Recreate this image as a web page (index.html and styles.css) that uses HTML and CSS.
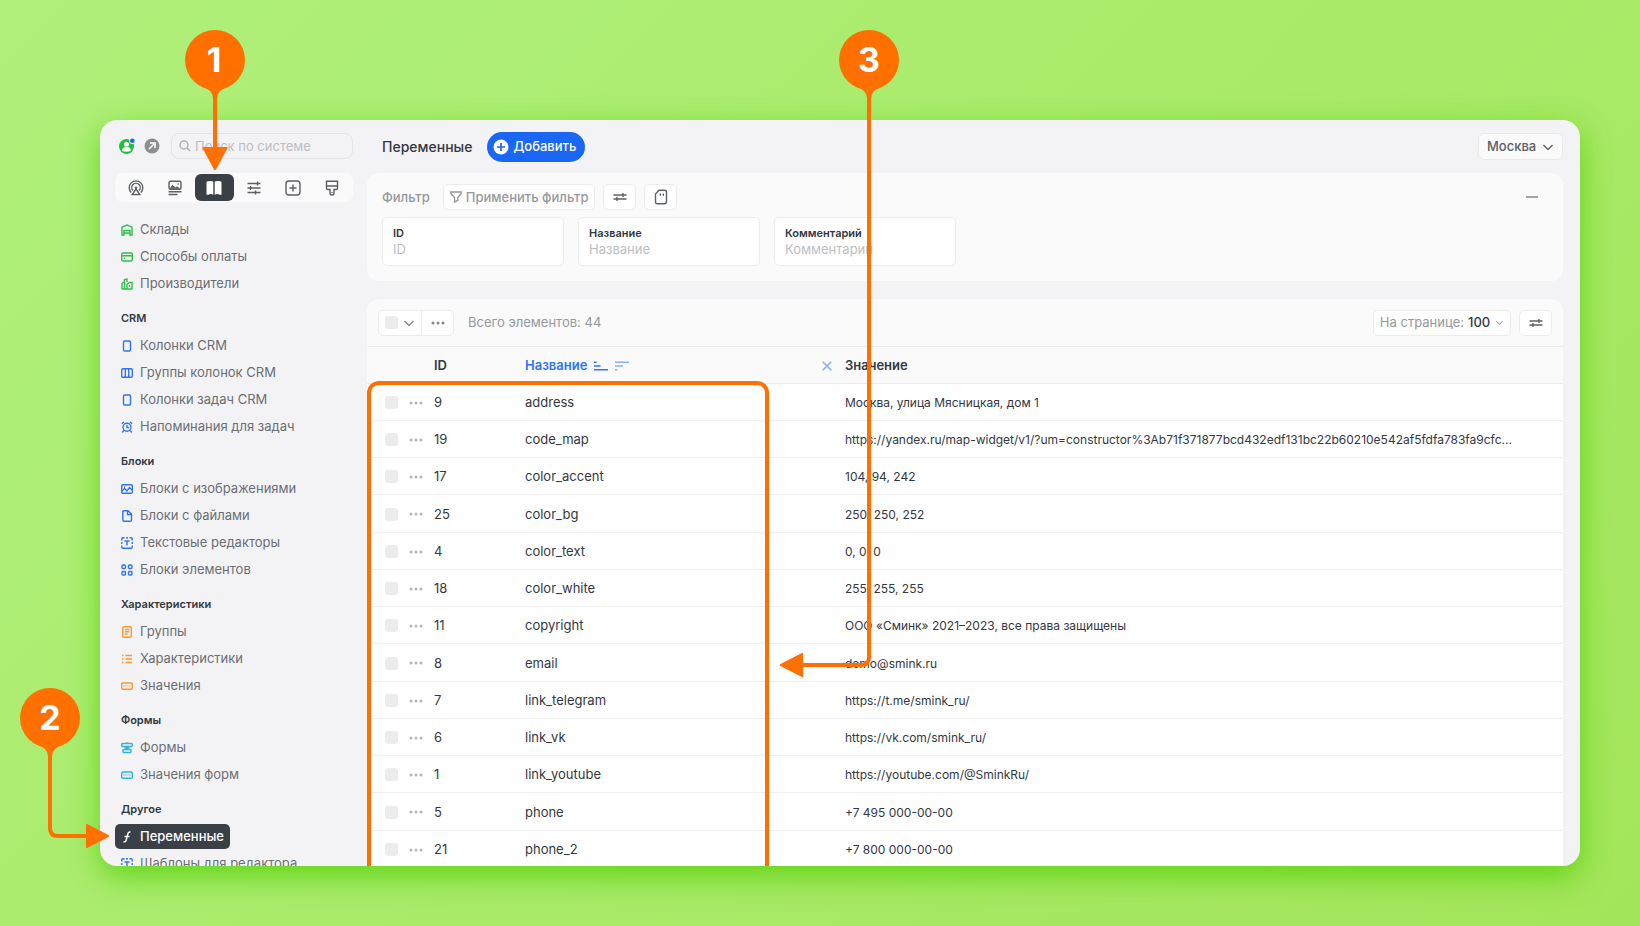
FILE: index.html
```html
<!DOCTYPE html>
<html lang="ru">
<head>
<meta charset="utf-8">
<title>Переменные</title>
<link rel="stylesheet" href="styles.css">
</head>
<body>
<svg class="defs" aria-hidden="true">
  <symbol id="chevron" viewBox="0 0 12 12"><path d="M1.500 4L6 8.500 10.500 4"/></symbol>
  <symbol id="sliders" viewBox="0 0 14 10"><path d="M.5 3h13M.5 7h13M10 1v4M4 5v4"/></symbol>
  <symbol id="dots" viewBox="0 0 14 4"><path class="solid" d="M2 .5a1.500 1.500 0 1 0 0 3a1.500 1.500 0 1 0 0-3M7 .5a1.500 1.500 0 1 0 0 3a1.500 1.500 0 1 0 0-3M12 .5a1.500 1.500 0 1 0 0 3a1.500 1.500 0 1 0 0-3"/></symbol>
  <symbol id="column" viewBox="0 0 12 12"><rect x="2.500" y="1" width="7" height="10" rx="1.200"/></symbol>
  <symbol id="value" viewBox="0 0 12 12"><rect x=".7" y="3" width="10.600" height="6.200" rx="1.200"/><path class="thin" d="M3 5v2M5 5v2M7 5v2M9 5v2"/></symbol>
  <symbol id="texted" viewBox="0 0 12 12"><path d="M.8 3.500V2Q.8.8 2 .8h1.500M5 .8h2M8.500.8H10q1.200 0 1.200 1.200v1.500M.8 5v2M11.200 5v2M.8 8.500V10q0 1.200 1.200 1.200h8q1.200 0 1.200-1.200V8.500M3.500 4h5M6 4v4.500"/></symbol>
</svg>

<div class="window">
  <aside class="sidebar">
    <div class="account">
      <button class="avatar" type="button" aria-label="Профиль">
        <svg viewBox="0 0 16 16"><circle cx="7.500" cy="8.500" r="7.500" fill="#20c03c"/><circle cx="7.500" cy="6.300" r="2.500" fill="#fff"/><path d="M3 12.500c.5-3 2.500-3.500 4.500-3.500s4 .5 4.500 3.500c-2 1.600-7 1.600-9 0z" fill="#fff"/><circle cx="13.300" cy="2.700" r="3.200" fill="#f3f3f5"/><circle cx="13.300" cy="2.700" r="2.300" fill="#1a66f5"/></svg>
      </button>
      <button class="avatar" type="button" aria-label="Открыть сайт">
        <svg viewBox="0 0 16 16"><circle cx="8" cy="8" r="7.500" fill="#8b8d91"/><path d="M5 11l5.500-5.500M6 5h5v5" fill="none" stroke="#fff" stroke-width="1.600"/></svg>
      </button>
      <label class="search">
        <svg class="icon" viewBox="0 0 12 12"><circle cx="5" cy="5" r="4"/><path d="M8 8l3 3"/></svg>
        <input type="text" placeholder="Поиск по системе" aria-label="Поиск по системе">
      </label>
    </div>

    <nav class="tabs">
      <button type="button" aria-label="Сайт"><svg class="icon" viewBox="0 0 16 16"><path d="M3.200 12.500a6.800 6.800 0 1 1 9.600 0M5 10.500a4.200 4.200 0 1 1 6 0M8 9l3.800 5.500H4.200z"/><circle class="solid" cx="8" cy="7.800" r="1.300"/></svg></button>
      <button type="button" aria-label="Контент"><svg class="icon" viewBox="0 0 16 16"><rect x="2" y="1.200" width="12" height="8" rx="1.500"/><path class="solid" d="M2.500 8.800l3-4 3 2.800 1.500-1.300 3.500 2.500z"/><path d="M10.500 4h1.200M1.500 11.700h13M1.500 14.500h9"/></svg></button>
      <button class="current" type="button" aria-label="Справочники"><svg class="icon" viewBox="0 0 16 16"><path class="solid" d="M.5 2.500q0-1.200 1.300-1.200 3.400-.5 5.500.2v13.300q-2.500-1.600-5 0H.5zM15.500 2.500q0-1.200-1.300-1.200-3.400-.5-5.500.2v13.300q2.500-1.600 5 0h1.800z"/></svg></button>
      <button type="button" aria-label="Настройки"><svg class="icon" viewBox="0 0 16 16"><path d="M1.500 3.500h13M1.500 8h13M1.500 12.500h13M11.500 1.500v4M4.500 6v4M9.500 10.500v4"/></svg></button>
      <button type="button" aria-label="Добавить модуль"><svg class="icon" viewBox="0 0 16 16"><rect x="1" y="1" width="14" height="14" rx="3"/><path d="M8 4.500v7M4.500 8h7"/></svg></button>
      <button type="button" aria-label="Оформление"><svg class="icon" viewBox="0 0 16 16"><path d="M2.500 1.200h11v7q0 1.300-1.300 1.300H10V13q0 2-2 2t-2-2V9.500H3.800q-1.300 0-1.300-1.300zM2.500 6h11M8 12v1"/></svg></button>
    </nav>

    <nav class="menu">
      <ul class="green">
        <li><a href="#"><svg class="icon" viewBox="0 0 12 12"><path d="M1 11V3.200L6 1l5 2.200V11H9V6.500H3V11zM3 9h6"/></svg>Склады</a></li>
        <li><a href="#"><svg class="icon" viewBox="0 0 12 12"><rect x=".7" y="2" width="10.600" height="8" rx="1.300"/><path d="M1 4.700h10M3 7.300h1"/></svg>Способы оплаты</a></li>
        <li><a href="#"><svg class="icon" viewBox="0 0 12 12"><path d="M1 11V5.500L3.500 3.500V11M3.500 4V1.500L6 1v3M6 11V6.500L8.500 4.500H11V11M.8 11h10.500M8.500 7v2"/></svg>Производители</a></li>
      </ul>
      <h2>CRM</h2>
      <ul class="blue">
        <li><a href="#"><svg class="icon"><use href="#column"/></svg>Колонки CRM</a></li>
        <li><a href="#"><svg class="icon" viewBox="0 0 12 12"><rect x=".7" y="1.700" width="10.600" height="8.600" rx="1.300"/><path d="M4.300 2v8M7.700 2v8"/></svg>Группы колонок CRM</a></li>
        <li><a href="#"><svg class="icon"><use href="#column"/></svg>Колонки задач CRM</a></li>
        <li><a href="#"><svg class="icon" viewBox="0 0 12 12"><circle cx="6" cy="6.300" r="4"/><path d="M6 4v2.500h2M.8 2.800L3 1M11.200 2.800L9 1M3 9.500l-1.700 2M9 9.500l1.700 2"/></svg>Напоминания для задач</a></li>
      </ul>
      <h2>Блоки</h2>
      <ul class="blue">
        <li><a href="#"><svg class="icon" viewBox="0 0 12 12"><rect x=".7" y="1.700" width="10.600" height="8.600" rx="1.300"/><path d="M1 8l2.500-2.500L6 8l2.500-3.500L11 7M3 4h1"/></svg>Блоки с изображениями</a></li>
        <li><a href="#"><svg class="icon" viewBox="0 0 12 12"><path d="M3 .8h4L10.500 4v6q0 1.200-1.200 1.200H3q-1.200 0-1.200-1.200V2Q1.800.8 3 .8zM6.500 1v3.500h4"/></svg>Блоки с файлами</a></li>
        <li><a href="#"><svg class="icon"><use href="#texted"/></svg>Текстовые редакторы</a></li>
        <li><a href="#"><svg class="icon" viewBox="0 0 12 12"><rect x="1" y="1" width="3.500" height="3.500" rx="1"/><rect x="7.500" y="1" width="3.500" height="3.500" rx="1"/><rect x="1" y="7.500" width="3.500" height="3.500" rx="1"/><rect x="7.500" y="7.500" width="3.500" height="3.500" rx="1"/></svg>Блоки элементов</a></li>
      </ul>
      <h2>Характеристики</h2>
      <ul class="orange">
        <li><a href="#"><svg class="icon" viewBox="0 0 12 12"><rect x="1.700" y=".8" width="8.600" height="10.400" rx="1.300"/><path d="M4 3.500h4.200M4 5.700h4.200M4 8h2.500"/></svg>Группы</a></li>
        <li><a href="#"><svg class="icon" viewBox="0 0 12 12"><path d="M1 2.500h1.500M4.500 2.500H11M1 6h1.500M4.500 6H11M1 9.500h1.500M4.500 9.500H11"/></svg>Характеристики</a></li>
        <li><a href="#"><svg class="icon"><use href="#value"/></svg>Значения</a></li>
      </ul>
      <h2>Формы</h2>
      <ul class="cyan">
        <li><a href="#"><svg class="icon" viewBox="0 0 12 12"><rect x=".7" y="1.500" width="10.600" height="3" rx="1"/><rect x="2" y="7.500" width="8" height="3" rx="1"/><path d="M6 .3v1M6 4.500v3M3.500 6h5"/></svg>Формы</a></li>
        <li><a href="#"><svg class="icon"><use href="#value"/></svg>Значения форм</a></li>
      </ul>
      <h2>Другое</h2>
      <ul class="blue">
        <li><a class="current" href="#"><svg class="icon" viewBox="0 0 12 12"><path d="M9.500 1.200Q7.300.5 6.800 3L5.200 9Q4.700 11.300 2.500 10.700M3.500 5.500h5"/></svg>Переменные</a></li>
        <li><a href="#"><svg class="icon"><use href="#texted"/></svg>Шаблоны для редактора</a></li>
      </ul>
    </nav>
  </aside>

  <main class="main">
    <header class="topbar">
      <h1>Переменные</h1>
      <button class="add" type="button"><svg viewBox="0 0 16 16"><circle cx="8" cy="8" r="7.500" fill="#fff"/><path d="M8 4v8M4 8h8" stroke="#1a66f5" stroke-width="1.700"/></svg>Добавить</button>
      <div class="city">
        <select aria-label="Город"><option>Москва</option></select>
        <svg class="icon"><use href="#chevron"/></svg>
      </div>
    </header>

    <section class="filter">
      <div class="filter-bar">
        <span class="filter-title">Фильтр</span>
        <button class="btn apply" type="button"><svg class="icon" viewBox="0 0 12 12"><path d="M.8 1h10.400v1.500L7.800 6.500v3L4.500 11V6.500L.8 2.500z"/></svg>Применить фильтр</button>
        <button class="btn square" type="button" aria-label="Настроить фильтр"><svg class="icon wide"><use href="#sliders"/></svg></button>
        <button class="btn square" type="button" aria-label="Сохранить фильтр"><svg class="icon big" viewBox="0 0 16 16"><path d="M6 1.200h5.500q2 0 2 2v9.600q0 2-2 2h-7q-2 0-2-2V5zM7.300 4.500v2.200M10.300 4.500v2.200"/></svg></button>
        <button class="collapse" type="button" aria-label="Свернуть"><svg class="icon" viewBox="0 0 12 12"><path d="M0 6h12"/></svg></button>
      </div>
      <div class="fields">
        <label class="field">ID<input type="text" placeholder="ID"></label>
        <label class="field">Название<input type="text" placeholder="Название"></label>
        <label class="field">Комментарий<input type="text" placeholder="Комментарий"></label>
      </div>
    </section>

    <section class="list">
      <div class="list-bar">
        <div class="bulk">
          <span class="bulk-check"><input type="checkbox" aria-label="Выбрать все"><svg class="icon"><use href="#chevron"/></svg></span>
          <button type="button" aria-label="Действия"><svg class="icon wide"><use href="#dots"/></svg></button>
        </div>
        <span class="total">Всего элементов: 44</span>
        <div class="btn per-page">
          <label for="per-page">На странице:</label>
          <select id="per-page"><option>100</option></select>
          <svg class="icon small"><use href="#chevron"/></svg>
        </div>
        <button class="btn square" type="button" aria-label="Настроить таблицу"><svg class="icon wide"><use href="#sliders"/></svg></button>
      </div>
      <div class="table-wrap">
        <table>
          <colgroup><col class="c-tools"><col class="c-id"><col class="c-name"><col></colgroup>
          <thead>
            <tr><th></th><th>ID</th><th><div class="sort">Название
              <button type="button" aria-label="По возрастанию"><svg class="icon" viewBox="0 0 14 10"><path d="M0 1.200h2.500M0 5h6.500M0 8.800h14"/></svg></button>
              <button class="faded" type="button" aria-label="По убыванию"><svg class="icon" viewBox="0 0 14 10"><path d="M0 1.200h14M0 5h8M0 8.800h2.500"/></svg></button>
              <button class="faded reset" type="button" aria-label="Сбросить"><svg class="icon" viewBox="0 0 10 10"><path d="M.7.7l8.600 8.600M9.300.7L.7 9.300"/></svg></button>
            </div></th><th>Значение</th></tr>
          </thead>
          <tbody>
            <tr><td><div class="tools"><input type="checkbox" aria-label="Выбрать 9"><button type="button" aria-label="Действия"><svg class="icon wide"><use href="#dots"/></svg></button></div></td><td>9</td><td>address</td><td>Москва, улица Мясницкая, дом 1</td></tr>
            <tr><td><div class="tools"><input type="checkbox" aria-label="Выбрать 19"><button type="button" aria-label="Действия"><svg class="icon wide"><use href="#dots"/></svg></button></div></td><td>19</td><td>code_map</td><td>https://yandex.ru/map-widget/v1/?um=constructor%3Ab71f371877bcd432edf131bc22b60210e542af5fdfa783fa9cfc...</td></tr>
            <tr><td><div class="tools"><input type="checkbox" aria-label="Выбрать 17"><button type="button" aria-label="Действия"><svg class="icon wide"><use href="#dots"/></svg></button></div></td><td>17</td><td>color_accent</td><td>104, 94, 242</td></tr>
            <tr><td><div class="tools"><input type="checkbox" aria-label="Выбрать 25"><button type="button" aria-label="Действия"><svg class="icon wide"><use href="#dots"/></svg></button></div></td><td>25</td><td>color_bg</td><td>250, 250, 252</td></tr>
            <tr><td><div class="tools"><input type="checkbox" aria-label="Выбрать 4"><button type="button" aria-label="Действия"><svg class="icon wide"><use href="#dots"/></svg></button></div></td><td>4</td><td>color_text</td><td>0, 0, 0</td></tr>
            <tr><td><div class="tools"><input type="checkbox" aria-label="Выбрать 18"><button type="button" aria-label="Действия"><svg class="icon wide"><use href="#dots"/></svg></button></div></td><td>18</td><td>color_white</td><td>255, 255, 255</td></tr>
            <tr><td><div class="tools"><input type="checkbox" aria-label="Выбрать 11"><button type="button" aria-label="Действия"><svg class="icon wide"><use href="#dots"/></svg></button></div></td><td>11</td><td>copyright</td><td>ООО «Сминк» 2021–2023, все права защищены</td></tr>
            <tr><td><div class="tools"><input type="checkbox" aria-label="Выбрать 8"><button type="button" aria-label="Действия"><svg class="icon wide"><use href="#dots"/></svg></button></div></td><td>8</td><td>email</td><td>demo@smink.ru</td></tr>
            <tr><td><div class="tools"><input type="checkbox" aria-label="Выбрать 7"><button type="button" aria-label="Действия"><svg class="icon wide"><use href="#dots"/></svg></button></div></td><td>7</td><td>link_telegram</td><td>https://t.me/smink_ru/</td></tr>
            <tr><td><div class="tools"><input type="checkbox" aria-label="Выбрать 6"><button type="button" aria-label="Действия"><svg class="icon wide"><use href="#dots"/></svg></button></div></td><td>6</td><td>link_vk</td><td>https://vk.com/smink_ru/</td></tr>
            <tr><td><div class="tools"><input type="checkbox" aria-label="Выбрать 1"><button type="button" aria-label="Действия"><svg class="icon wide"><use href="#dots"/></svg></button></div></td><td>1</td><td>link_youtube</td><td>https://youtube.com/@SminkRu/</td></tr>
            <tr><td><div class="tools"><input type="checkbox" aria-label="Выбрать 5"><button type="button" aria-label="Действия"><svg class="icon wide"><use href="#dots"/></svg></button></div></td><td>5</td><td>phone</td><td>+7 495 000-00-00</td></tr>
            <tr><td><div class="tools"><input type="checkbox" aria-label="Выбрать 21"><button type="button" aria-label="Действия"><svg class="icon wide"><use href="#dots"/></svg></button></div></td><td>21</td><td>phone_2</td><td>+7 800 000-00-00</td></tr>
          </tbody>
        </table>
        <div class="frame"></div>
      </div>
    </section>
  </main>
</div>

<svg class="callouts" width="920" height="870" viewBox="0 0 920 870">
  <g class="line"><path d="M215 92V150"/><path d="M50 750V828q0 8 8 8H88"/><path d="M869 92V657q0 8-8 8H802"/></g>
  <g class="fill">
    <circle cx="215" cy="60" r="30"/><path d="M201 86q12 4 12 12h4q0-8 12-12zM203 147h24q1 0 .5 1L216 169.500q-1 1.500-2 0L202.500 148q-.5-1 .5-1z"/>
    <circle cx="50" cy="718" r="30"/><path d="M36 744q12 4 12 12h4q0-8 12-12zM86 824.500v23q0 1 1 .5l21.500-11q1.500-1 0-2L87 824q-1-.5-1 .5z"/>
    <circle cx="869" cy="60" r="30"/><path d="M855 86q12 4 12 12h4q0-8 12-12zM803 653.500v23q0 1-1 .5l-21.500-11q-1.500-1 0-2L802 653q1-.5 1 .5z"/>
  </g>
  <g class="digits"><text x="214" y="72">1</text><text x="50" y="730">2</text><text x="869" y="72">3</text></g>
</svg>
</body>
</html>
```

FILE: styles.css
```css
* { box-sizing: border-box; }

body {
  margin: 0;
  min-height: 100vh;
  padding: 120px 60px 60px 100px;
  position: relative;
  background: linear-gradient(135deg, #b0f07b, #a3e55a);
  font: 13px/17px Inter, "Noto Sans", sans-serif;
  color: #34383f;
}

button, input, select { font: inherit; color: inherit; margin: 0; }
button { border: 0; padding: 0; background: none; display: flex; align-items: center; justify-content: center; cursor: pointer; }
input[type="text"] { border: 0; padding: 0; background: none; outline: 0; width: 100%; min-width: 0; }
input::placeholder { color: #bdbec1; opacity: 1; }
input[type="checkbox"] { appearance: none; width: 13px; height: 13px; border-radius: 3px; background: #ececed; }
select { appearance: none; border: 0; padding: 0; background: none; outline: 0; }

.defs { position: absolute; width: 0; height: 0; }
.icon { width: 12px; height: 12px; flex: none; fill: none; stroke: currentColor; stroke-width: 1.4; }
.icon.wide { width: 14px; height: 10px; }
.icon.big { width: 16px; height: 16px; }
.icon.small { width: 9px; height: 9px; }
.solid { fill: currentColor; stroke: none; }
.thin { stroke-width: 0.6; }

.window {
  display: flex;
  height: calc(100vh - 180px);
  border-radius: 17px;
  overflow: hidden;
  background: #f3f3f5;
  box-shadow: 0 10px 30px rgba(80, 208, 0, 0.8);
}

/* Sidebar */
.sidebar { width: 267px; flex: none; padding: 13px 14px 0 15px; overflow: hidden; }
.account { display: flex; align-items: center; gap: 9px; padding-left: 4px; }
.avatar svg { width: 16px; height: 16px; }
.search {
  flex: 1; height: 26px; margin-left: 2px; padding: 0 7px;
  display: flex; align-items: center; gap: 4px;
  border: 1px solid #e4e4e6; border-radius: 8px; color: #aeb0b3;
}
.tabs { display: flex; height: 29px; margin-top: 14px; padding: 1px; border-radius: 8px; background: #fafafa; }
.tabs button { flex: 1; border-radius: 6px; color: #5d6066; }
.tabs .icon { width: 16px; height: 16px; }
.tabs .current { background: #3b4047; color: #fff; }

.menu { margin-top: 14px; white-space: nowrap; }
.menu ul { list-style: none; margin: 0; padding: 0; }
.menu li { display: flex; align-items: center; height: 27px; }
.menu h2 { margin: 0; padding: 14px 0 6px 6px; font-size: 11px; line-height: 15px; font-weight: 600; color: #34383f; }
.menu a {
  display: flex; align-items: center; gap: 7px; height: 25px; padding: 0 6px;
  border-radius: 5px; color: #6b6e74; text-decoration: none;
}
.menu a.current { background: #3b4047; color: #fff; font-weight: 500; }
.green .icon { color: #2cc04a; }
.blue .icon { color: #2f74f7; }
.orange .icon { color: #fb9630; }
.cyan .icon { color: #33b1d8; }
.menu .current .icon { color: #fff; }

/* Main column */
.main { flex: 1; min-width: 0; display: flex; flex-direction: column; padding-right: 17px; }
.topbar { display: flex; align-items: center; height: 53px; padding-left: 15px; }
.topbar h1 { margin: 0 15px 0 0; font-size: 14px; line-height: 18px; font-weight: 500; }
.add { height: 30px; padding: 0 9px 0 6px; gap: 4px; border-radius: 15px; background: #1a66f5; color: #fff; font-weight: 500; }
.add svg { width: 16px; height: 16px; }
.city {
  display: flex; align-items: center; gap: 5px; height: 27px; margin-left: auto; padding: 0 8px;
  border: 1px solid #e9e9ea; border-radius: 6px; background: #fafafa; color: #5d6066; font-weight: 500;
}

.btn {
  display: flex; align-items: center; gap: 4px; height: 26px; padding: 0 8px;
  border: 1px solid #ececec; border-radius: 5px; background: #fff; color: #96989c;
}
.btn.apply { padding: 0 6px; }
.btn.square { width: 33px; padding: 0; justify-content: center; color: #5d6066; }

.filter { padding: 11px 15px 15px; border-radius: 12px; background: #fafafa; }
.filter-bar { display: flex; align-items: center; gap: 8px; }
.filter-title { margin-right: 5px; color: #96989c; font-weight: 500; }
.filter-bar .btn { font-weight: 500; }
.collapse { margin-left: auto; margin-right: 10px; color: #85878c; }
.fields { display: flex; gap: 14px; margin-top: 7px; }
.field {
  width: 182px; height: 49px; padding: 8px 10px; display: flex; flex-direction: column;
  border: 1px solid #ececec; border-radius: 5px; background: #fff;
  font-size: 11px; line-height: 15px; font-weight: 600;
}
.field input { font-size: 13px; line-height: 17px; font-weight: 400; }

.list { flex: 1; min-height: 0; margin-top: 18px; border-radius: 12px 12px 0 0; overflow: hidden; background: #fafafa; }
.list-bar { display: flex; align-items: center; gap: 8px; height: 47px; padding: 0 11px; }
.bulk { display: flex; height: 26px; border: 1px solid #ececec; border-radius: 5px; background: #fff; color: #85878c; }
.bulk-check { display: flex; align-items: center; gap: 5px; padding: 0 6px; border-right: 1px solid #ececec; }
.bulk button { width: 31px; }
.total { margin-left: 6px; color: #96989c; }
.per-page { margin-left: auto; padding: 0 6px; }
.per-page select { color: #34383f; font-weight: 500; }

.table-wrap { position: relative; }
table { width: 100%; table-layout: fixed; border-collapse: separate; border-spacing: 0; background: #fff; }
.c-tools { width: 67px; }
.c-id { width: 91px; }
.c-name { width: 320px; }
th, td { height: 37px; padding: 1px 0 0; text-align: left; white-space: nowrap; }
th { height: 38px; border-top: 1px solid #ececec; border-bottom: 1px solid #ececec; background: #fafafa; font-weight: 600; }
td { border-bottom: 1px solid #efefef; }
tr:nth-child(4n) td { height: 38px; }
td:last-child { font-size: 12px; }
.tools { display: flex; align-items: center; gap: 11px; padding-left: 18px; color: #b4b5b8; }
.sort { display: flex; align-items: center; gap: 7px; padding-right: 11px; color: #2f74f7; }
.sort .icon { width: 14px; height: 10px; stroke-width: 1.6; }
.sort .faded { opacity: 0.55; }
.sort .reset { margin-left: auto; }

/* Annotations drawn over the window */
.frame {
  position: absolute; left: 0; top: 35px; bottom: 0; width: 402px;
  border: 4px solid #ff7000; border-bottom: 0; border-radius: 12px 12px 0 0; pointer-events: none;
}
.callouts { position: absolute; left: 0; top: 0; pointer-events: none; }
.callouts .line { fill: none; stroke: #ff7000; stroke-width: 4; }
.callouts .fill { fill: #ff7000; }
.callouts .digits { fill: #fff; font-size: 34px; font-weight: 700; text-anchor: middle; }
```
